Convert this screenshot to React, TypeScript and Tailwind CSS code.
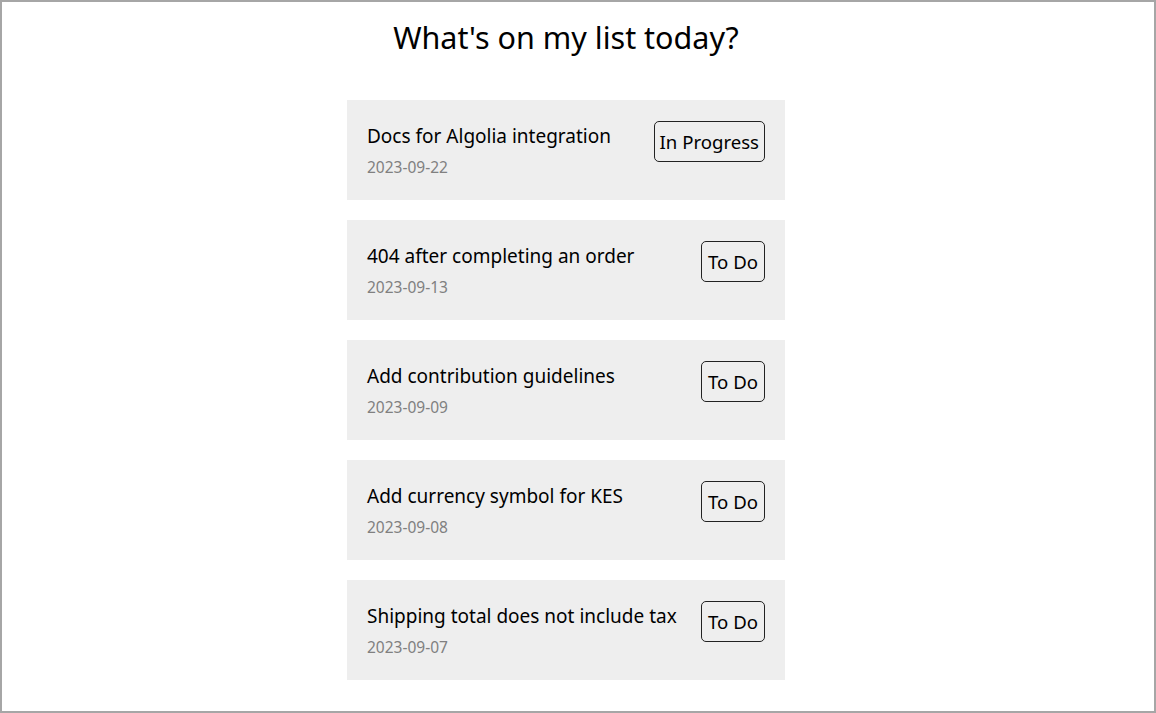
import React from 'react';

const tasks = [
  { title: 'Docs for Algolia integration', date: '2023-09-22', status: 'In Progress' },
  { title: '404 after completing an order', date: '2023-09-13', status: 'To Do' },
  { title: 'Add contribution guidelines', date: '2023-09-09', status: 'To Do' },
  { title: 'Add currency symbol for KES', date: '2023-09-08', status: 'To Do' },
  { title: 'Shipping total does not include tax', date: '2023-09-07', status: 'To Do' },
];

function App() {
  return (
    <div
      className="h-[713px] border-2 border-[#a6a6a6] bg-white text-black overflow-hidden"
      style={{ fontFamily: '"Segoe UI", "Noto Sans", sans-serif' }}
    >
      <div className="flex flex-col items-center pr-6">
        <h1 className="mt-[13px] text-[30.5px] leading-[44px]">What's on my list today?</h1>
        <ul className="mt-[41px] w-[438px] flex flex-col gap-5">
          {tasks.map((t) => (
            <li key={t.title} className="h-[100px] bg-[#eeeeee] p-5 flex items-start justify-between">
              <div>
                <div className="text-[19px] leading-[30px] mt-[1px]">{t.title}</div>
                <div className="text-[15.5px] leading-[20px] text-[#808080] mt-[6px]">{t.date}</div>
              </div>
              <button className="mt-[1px] min-w-[64px] border border-[#222] rounded-[5px] px-[5px] pt-[2px] h-[41px] text-[18.6px] leading-none">
                {t.status}
              </button>
            </li>
          ))}
        </ul>
      </div>
    </div>
  );
}

export default App;
